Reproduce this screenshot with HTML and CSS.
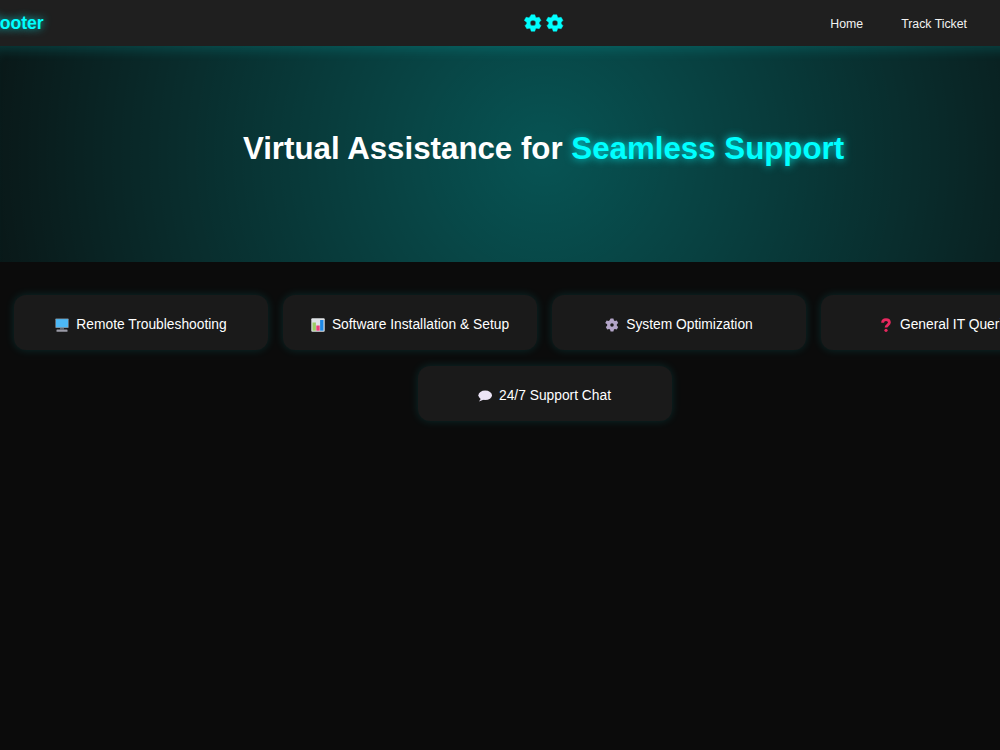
FILE: index.html
```html
<!DOCTYPE html>
<html lang="en">
<head>
<meta charset="utf-8">
<title>Virtual Assistance</title>
<link rel="stylesheet" href="styles.css">
</head>
<body>
<div class="page">
  <header class="nav">
    <div class="logo">Rooter</div>
    <div class="gears">
      <svg class="gear" viewBox="0 0 24 24"><path fill-rule="evenodd" stroke-linejoin="round" d="M9.600 1h4.800l1 3.200 1.600.9 3.200-.8 2.400 4.200-2.300 2.400v2.200l2.300 2.400-2.400 4.200-3.200-.8-1.600.9-1 3.200H9.600l-1-3.200-1.600-.9-3.200.8-2.400-4.200 2.300-2.400v-2.200L.4 8.500l2.400-4.200 3.200.8 1.600-.9zM12 8.200a3.800 3.800 0 1 0 0 7.600a3.800 3.800 0 0 0 0-7.600z"/></svg>
      <svg class="gear" viewBox="0 0 24 24"><path fill-rule="evenodd" stroke-linejoin="round" d="M9.600 1h4.800l1 3.200 1.600.9 3.200-.8 2.400 4.200-2.300 2.400v2.200l2.300 2.400-2.400 4.200-3.200-.8-1.600.9-1 3.200H9.600l-1-3.200-1.600-.9-3.200.8-2.400-4.200 2.300-2.400v-2.200L.4 8.500l2.400-4.200 3.200.8 1.600-.9zM12 8.200a3.800 3.800 0 1 0 0 7.600a3.800 3.800 0 0 0 0-7.600z"/></svg>
    </div>
    <nav class="links"><a href="#">Home</a><a href="#">Track Ticket</a></nav>
  </header>
  <section class="hero">
    <h1>Virtual Assistance for <span class="accent">Seamless Support</span></h1>
  </section>
  <section class="cards">
    <div class="card">
      <svg class="ico" viewBox="0 0 14 14"><rect x="0.300" y="0.500" width="13.400" height="9.500" rx="0.800" fill="#7d8b98"/><rect x="1" y="1.200" width="12" height="8" fill="#4db8f5"/><rect x="5" y="10" width="4" height="1.500" fill="#5f6670"/><rect x="1.500" y="11.500" width="11" height="2.300" rx="0.400" fill="#9a9aa6"/></svg>
      <span>Remote Troubleshooting</span>
    </div>
    <div class="card">
      <svg class="ico" viewBox="0 0 14 14"><rect x="0.300" y="0.300" width="13.400" height="13.400" rx="1" fill="#dfe3e6"/><rect x="1.500" y="4.500" width="3.400" height="8.200" fill="#9ccc65"/><rect x="5.300" y="7.500" width="3.400" height="5.200" fill="#ec407a"/><rect x="9.100" y="2" width="3.400" height="10.700" fill="#1e88e5"/></svg>
      <span>Software Installation &amp; Setup</span>
    </div>
    <div class="card">
      <svg class="ico" viewBox="0 0 24 24"><path fill="#b3a5c8" fill-rule="evenodd" d="M9.600 1h4.800l1 3.200 1.600.9 3.200-.8 2.400 4.200-2.300 2.400v2.200l2.300 2.400-2.400 4.200-3.200-.8-1.600.9-1 3.200H9.600l-1-3.200-1.600-.9-3.200.8-2.400-4.200 2.300-2.400v-2.200L.4 8.500l2.400-4.200 3.200.8 1.600-.9zM12 9a3 3 0 1 0 0 6a3 3 0 0 0 0-6z"/></svg>
      <span>System Optimization</span>
    </div>
    <div class="card">
      <svg class="ico" viewBox="0 0 14 14"><path fill="none" stroke="#e8285f" stroke-width="2.800" d="M3.600 4.800C3.600 2.800 5 1.600 7 1.600s3.400 1.200 3.400 3c0 2.400-3.400 2.600-3.400 5"/><circle cx="7" cy="12.300" r="1.600" fill="#e8285f"/></svg>
      <span>General IT Queries</span>
    </div>
    <div class="card">
      <svg class="ico" viewBox="0 0 14 14"><ellipse cx="7.200" cy="6.300" rx="6.800" ry="4.800" fill="#ece4f7"/><path d="M3 9.500 1 12.500 6 10.500z" fill="#ece4f7"/></svg>
      <span>24/7 Support Chat</span>
    </div>
  </section>
</div>
</body>
</html>
```
FILE: styles.css
```css
html, body { margin: 0; height: 100%; overflow: hidden; background: #0b0b0b; }
body { font-family: "Liberation Sans", Arial, sans-serif; color: #fff; }
.page { width: 1089px; }
.nav {
  height: 46px;
  background: #1f1f1f;
  display: grid;
  grid-template-columns: 1fr auto 1fr;
  align-items: center;
}
.logo {
  font-size: 17.6px;
  font-weight: 700;
  color: #0ff;
  text-shadow: 0 0 8px rgba(0,255,255,.8);
  margin-left: -13px;
}
.gears { display: flex; gap: 4px; margin-right: 2px; }
.gear { width: 18px; height: 18px; fill: #0ff; stroke: #0ff; stroke-width: .6; }
.links { display: flex; justify-content: flex-end; gap: 38px; padding: 1px 122px 0 0; font-size: 12.3px; }
.links a { color: #f2f2f2; text-decoration: none; }
.hero {
  height: 216px;
  box-sizing: border-box;
  padding: 84px 2px 0 0;
  text-align: center;
  background: radial-gradient(circle, rgba(0,255,255,.3) 0%, rgba(0,255,255,.06) 100%), #0a0a0a;
  box-shadow: inset 0 12px 12px -8px rgba(0,255,255,.15);
}
h1 { margin: 0; font-size: 31.28px; font-weight: 700; line-height: 37px; }
.accent { color: #0ff; text-shadow: 0 0 9px rgba(0,255,255,.8); }
.cards {
  display: flex;
  flex-wrap: wrap;
  justify-content: center;
  gap: 16px 15px;
  padding-top: 33px;
}
.card {
  width: 254px;
  height: 55px;
  box-sizing: border-box;
  padding-top: 4px;
  display: flex;
  align-items: center;
  justify-content: center;
  gap: 7px;
  background: #1a1a1a;
  border-radius: 12px;
  font-size: 13.8px;
  box-shadow: 0 0 10px rgba(0,255,255,.13);
}
.ico { width: 14px; height: 14px; flex: none; }
```
